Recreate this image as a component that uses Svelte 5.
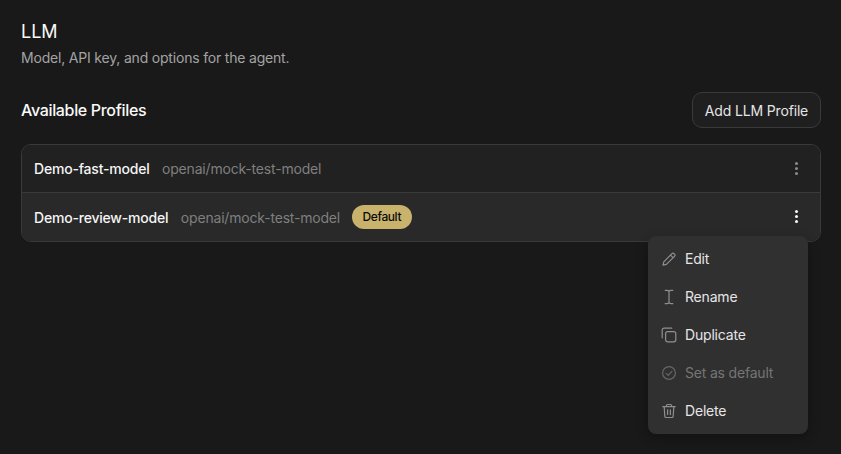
<script lang="ts">
  const profiles = [
    { name: "Demo-fast-model", model: "openai/mock-test-model", isDefault: false },
    { name: "Demo-review-model", model: "openai/mock-test-model", isDefault: true },
  ];
</script>

<main class="page">
  <header class="head">
    <h1>LLM</h1>
    <p>Model, API key, and options for the agent.</p>
  </header>

  <div class="toolbar">
    <h2>Available Profiles</h2>
    <button type="button" class="add">Add LLM Profile</button>
  </div>

  <div class="anchor">
    <ul class="list">
      {#each profiles as profile}
        <li class="row" class:active={profile.isDefault}>
          <span class="name">{profile.name}</span>
          <span class="model">{profile.model}</span>
          {#if profile.isDefault}
            <span class="badge">Default</span>
          {/if}
          <button type="button" class="more" aria-label="More">
            <i></i><i></i><i></i>
          </button>
        </li>
      {/each}
    </ul>

    <div class="menu" role="menu">
      <div class="item" role="menuitem">
        <svg viewBox="0 0 16 16"><path d="M2 14.2l.8-3.4L10.9 2.7a1.5 1.5 0 0 1 2.1 0l.5.5a1.5 1.5 0 0 1 0 2.1l-8.1 8.1zM9.5 4.1l2.6 2.6" /></svg>
        Edit
      </div>
      <div class="item" role="menuitem">
        <svg viewBox="0 0 16 16"><path d="M4.2 1.3h1.9c.9 0 1.6.4 1.9 1.1.3-.7 1-1.1 1.9-1.1h1.9M8 2.4v11.2M4.2 14.7h1.9c.9 0 1.6-.4 1.9-1.1.3.7 1 1.1 1.9 1.1h1.9" /></svg>
        Rename
      </div>
      <div class="item" role="menuitem">
        <svg viewBox="0 0 16 16"><path d="M1.2 10.8V3.2c0-1.1.9-2 2-2h7.6" /><rect x="4.6" y="4.6" width="10.2" height="10.2" rx="2" /></svg>
        Duplicate
      </div>
      <div class="item disabled" role="menuitem">
        <svg viewBox="0 0 16 16"><circle cx="8" cy="8" r="6.4" /><path d="M5.2 8.3l2 2 3.7-4" /></svg>
        Set as default
      </div>
      <div class="item" role="menuitem">
        <svg viewBox="0 0 16 16"><path d="M1.8 3.7h12.4M5.4 3.5V2.7c0-.7.5-1.2 1.2-1.2h2.8c.7 0 1.2.5 1.2 1.2v.8M3.2 3.9l.6 9.3c0 .8.6 1.3 1.3 1.3h5.8c.7 0 1.3-.5 1.3-1.3l.6-9.3M6.6 6.9v4.6M9.4 6.9v4.6" /></svg>
        Delete
      </div>
    </div>
  </div>
</main>

<style>
  :global(body) {
    background: #191919;
    font-family: Inter, "Liberation Sans", sans-serif;
    letter-spacing: -0.19px;
    overflow: hidden;
  }

  .page {
    height: 454px;
    box-sizing: border-box;
    padding: 20px 20px 0 21px;
  }

  h1 {
    margin: 0;
    font-size: 18px;
    line-height: 24px;
    font-weight: 400;
    letter-spacing: 0;
    color: #fafafa;
  }

  .head p {
    margin: 4px 0 0;
    font-size: 14px;
    line-height: 20px;
    color: #a3a3a3;
  }

  .toolbar {
    display: flex;
    align-items: center;
    justify-content: space-between;
    margin-top: 24px;
  }

  h2 {
    margin: 0;
    font-size: 16px;
    line-height: 24px;
    font-weight: 450;
    letter-spacing: -0.33px;
    color: #fafafa;
  }

  .add {
    width: 129px;
    height: 36px;
    padding: 0;
    border: 1px solid #3a3a3a;
    border-radius: 10px;
    background: #1f1f1f;
    color: #e5e5e5;
    font: 400 14px Inter, "Liberation Sans", sans-serif;
    letter-spacing: -0.16px;
  }

  .anchor {
    position: relative;
    margin-top: 16px;
  }

  .list {
    list-style: none;
    margin: 0;
    padding: 0;
    border: 1px solid #3a3a3a;
    border-radius: 10px;
    overflow: hidden;
  }

  .row {
    display: flex;
    align-items: center;
    height: 47px;
    padding: 0 12px;
    background: #212121;
    font-size: 14px;
  }

  .row + .row {
    height: 48px;
    border-top: 1px solid #3a3a3a;
  }

  .row.active {
    background: #292929;
  }

  .name {
    color: #f5f5f5;
    font-weight: 450;
    letter-spacing: -0.2px;
  }

  .model {
    margin-left: 12.5px;
    color: #7f7f7f;
  }

  .badge {
    margin-left: 12px;
    padding: 0 10.5px;
    height: 24px;
    line-height: 23px;
    border-radius: 12px;
    background: #c9b36c;
    color: #0a0a0a;
    font-size: 12px;
    font-weight: 500;
    letter-spacing: -0.4px;
  }

  .more {
    margin-left: auto;
    display: flex;
    flex-direction: column;
    align-items: center;
    gap: 2px;
    width: 24px;
    margin-bottom: 1px;
    padding: 0;
    border: 0;
    background: none;
  }

  .more i {
    width: 3px;
    height: 3px;
    border-radius: 50%;
    background: #8a8a8a;
  }

  .active .more i {
    background: #f5f5f5;
  }

  .menu {
    position: absolute;
    top: 92px;
    left: 627px;
    width: 160px;
    padding: 3.5px 0 4.5px;
    box-sizing: border-box;
    border-radius: 8px;
    background: #303030;
    box-shadow: 0 4px 12px rgba(0, 0, 0, 0.3);
  }

  .item {
    display: flex;
    align-items: center;
    gap: 8px;
    height: 38px;
    padding: 0 13px;
    font-size: 14px;
    color: #e5e5e5;
  }

  .item.disabled {
    color: #757575;
  }

  .item svg {
    width: 16px;
    height: 16px;
    flex: none;
    fill: none;
    stroke: #8f8f8f;
    stroke-width: 1.2;
    stroke-linecap: round;
    stroke-linejoin: round;
  }

  .item.disabled svg {
    stroke: #666;
  }
</style>
